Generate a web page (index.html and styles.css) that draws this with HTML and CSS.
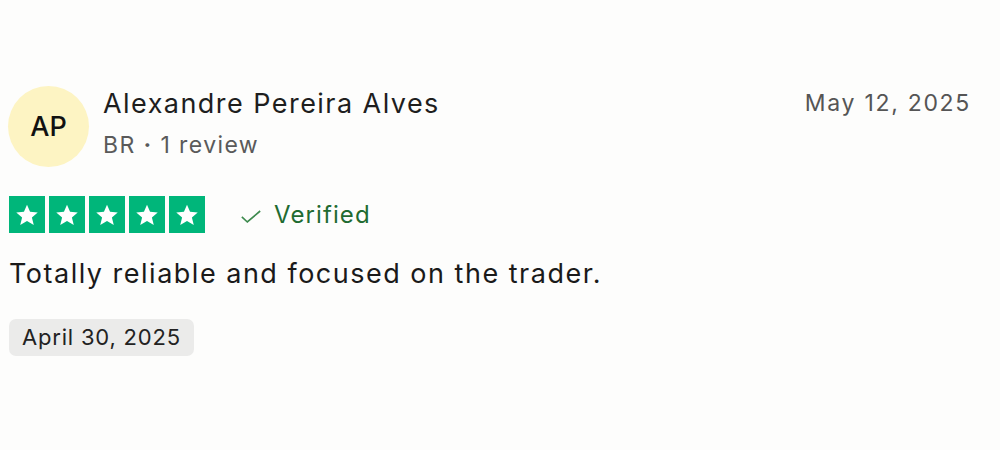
FILE: index.html
```html
<!DOCTYPE html>
<html lang="en">
<head>
<meta charset="utf-8">
<link rel="stylesheet" href="styles.css">
</head>
<body>
<article class="review">
  <header class="head">
    <div class="avatar">AP</div>
    <div class="who">
      <div class="name">Alexandre Pereira Alves</div>
      <div class="meta">BR <span class="dot">·</span> 1 review</div>
    </div>
    <time class="date">May 12, 2025</time>
  </header>
  <div class="rating">
    <div class="stars">
      <span class="star"><svg viewBox="0 0 24 24"><path d="M12 3.2l2.6 6.1 6.6.5-5 4.3 1.6 6.5L12 17.1l-5.8 3.5 1.6-6.5-5-4.3 6.6-.5z" fill="#fff"/></svg></span>
      <span class="star"><svg viewBox="0 0 24 24"><path d="M12 3.2l2.6 6.1 6.6.5-5 4.3 1.6 6.5L12 17.1l-5.8 3.5 1.6-6.5-5-4.3 6.6-.5z" fill="#fff"/></svg></span>
      <span class="star"><svg viewBox="0 0 24 24"><path d="M12 3.2l2.6 6.1 6.6.5-5 4.3 1.6 6.5L12 17.1l-5.8 3.5 1.6-6.5-5-4.3 6.6-.5z" fill="#fff"/></svg></span>
      <span class="star"><svg viewBox="0 0 24 24"><path d="M12 3.2l2.6 6.1 6.6.5-5 4.3 1.6 6.5L12 17.1l-5.8 3.5 1.6-6.5-5-4.3 6.6-.5z" fill="#fff"/></svg></span>
      <span class="star"><svg viewBox="0 0 24 24"><path d="M12 3.2l2.6 6.1 6.6.5-5 4.3 1.6 6.5L12 17.1l-5.8 3.5 1.6-6.5-5-4.3 6.6-.5z" fill="#fff"/></svg></span>
    </div>
    <div class="verified">
      <svg class="check" viewBox="0 0 24 16"><path d="M2 8.5l6 5.5L22 2" fill="none" stroke="#3d8a4e" stroke-width="1.8"/></svg>
      <span>Verified</span>
    </div>
  </div>
  <p class="text">Totally reliable and focused on the trader.</p>
  <span class="pill">April 30, 2025</span>
</article>
</body>
</html>
```
FILE: styles.css
```css
html, body {
  margin: 0;
  padding: 0;
  background: #fdfdfc;
}
body {
  font-family: Inter, "Noto Sans", sans-serif;
  color: #1c1c1c;
}
.review {
  padding: 86px 30px 0 8px;
}
.head {
  display: flex;
  align-items: flex-start;
}
.avatar {
  width: 81px;
  height: 81px;
  border-radius: 50%;
  background: #fdf4c3;
  display: flex;
  align-items: center;
  justify-content: center;
  font-size: 27px;
  font-weight: 500;
  color: #111;
  flex: none;
}
.who {
  margin-left: 14px;
  flex: 1;
  padding-top: 1px;
}
.name {
  font-size: 27px;
  line-height: 34px;
  color: #1e1e1e;
  letter-spacing: 1.45px;
}
.meta {
  font-size: 23px;
  line-height: 30px;
  margin-top: 9px;
  color: #5a5a5a;
  letter-spacing: 1.4px;
}
.dot {
  font-weight: 700;
}
.date {
  font-size: 23px;
  line-height: 34px;
  color: #555;
  padding-top: 0;
  letter-spacing: 1.7px;
  margin-right: -1px;
}
.rating {
  display: flex;
  align-items: center;
  margin-top: 29px;
  padding-left: 1px;
}
.stars {
  display: flex;
  gap: 4px;
}
.star {
  width: 36px;
  height: 37px;
  background: #00b67a;
  display: flex;
  align-items: center;
  justify-content: center;
}
.star svg {
  width: 28px;
  height: 28px;
}
.verified {
  display: flex;
  align-items: center;
  margin-left: 35px;
  color: #1f6b31;
  font-size: 24px;
  letter-spacing: 1.1px;
}
.check {
  width: 22px;
  height: 15px;
  margin-right: 12px;
  margin-top: 4px;
}
.text {
  margin: 23px 0 0 1px;
  font-size: 27px;
  line-height: 36px;
  color: #1a1a1a;
  letter-spacing: 1.5px;
}
.pill {
  display: inline-block;
  margin-top: 27px;
  margin-left: 1px;
  background: #ebebea;
  border-radius: 7px;
  padding: 0 13px;
  height: 37px;
  line-height: 37px;
  font-size: 22px;
  color: #222;
  letter-spacing: 0.8px;
}
```
